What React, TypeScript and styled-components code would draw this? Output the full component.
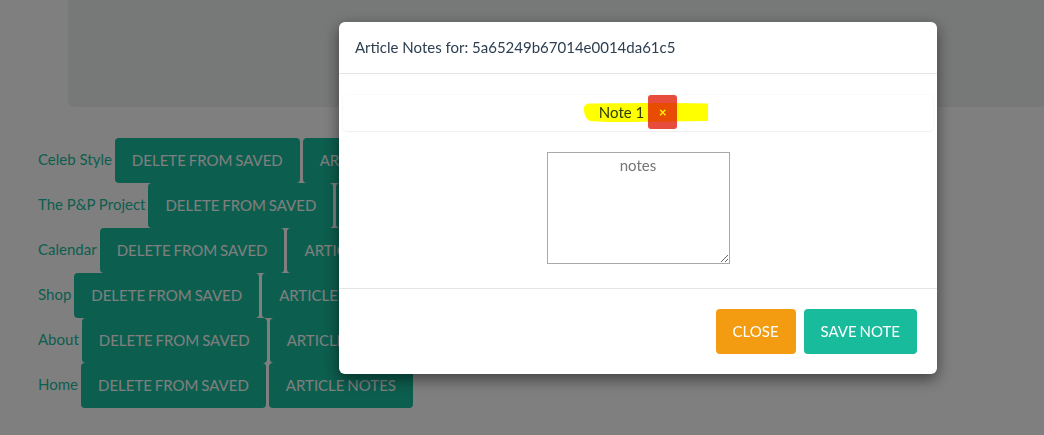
import React from "react";
import styled, { createGlobalStyle } from "styled-components";

const GlobalStyle = createGlobalStyle`
  html, body {
    margin: 0;
    background: #ffffff;
    font-family: Lato, "Open Sans", Arial, sans-serif;
    overflow: hidden;
  }
`;

const Page = styled.div`
  width: 1044px;
  height: 435px;
  padding-left: 38px;
  box-sizing: border-box;
`;

const Jumbotron = styled.div`
  height: 107px;
  margin-left: 30px;
  margin-right: -40px;
  background: #eef3f1;
  border-bottom-left-radius: 6px;
`;

const SavedList = styled.div`
  margin-top: 31px;
  display: flex;
  flex-direction: column;
`;

const Row = styled.div`
  display: flex;
  align-items: baseline;
  gap: 3px;
`;

const RowLink = styled.a`
  color: #18bc9c;
  font-size: 15px;
  line-height: 21px;
  text-decoration: none;
  position: relative;
  top: -1px;
`;

const Btn = styled.button<{ $tone: "teal" | "orange" | "red" }>`
  font-family: Lato, "Open Sans", Arial, sans-serif;
  font-size: 15px;
  line-height: 21px;
  padding: 11px 16px;
  border: 1px solid transparent;
  border-radius: 4px;
  color: #ffffff;
  text-transform: uppercase;
  word-spacing: -1px;
  white-space: nowrap;
  cursor: pointer;
  background: ${(p) =>
    p.$tone === "teal" ? "#18bc9c" : p.$tone === "orange" ? "#f39c12" : "#e74c3c"};
`;

const Backdrop = styled.div`
  position: fixed;
  inset: 0;
  background: rgba(0, 0, 0, 0.5);
`;

const Dialog = styled.div`
  position: fixed;
  top: 22px;
  left: 339px;
  width: 598px;
  background: #ffffff;
  border-radius: 6px;
  box-shadow: 0 5px 15px rgba(0, 0, 0, 0.5);
  color: #2c3e50;
`;

const Header = styled.div`
  padding: 15px 16px;
  border-bottom: 1px solid #e5e5e5;
`;

const Title = styled.h4`
  margin: 0;
  font-size: 15px;
  line-height: 21px;
  font-weight: 400;
`;

const Body = styled.div`
  padding: 21px 4px 24px 4px;
`;

const NoteCard = styled.div`
  position: relative;
  height: 36px;
  display: flex;
  justify-content: center;
  align-items: flex-start;
  gap: 4px;
  border-radius: 4px;
  box-shadow: 0 1px 2px rgba(0, 0, 0, 0.06), 0 0 0 1px rgba(0, 0, 0, 0.015);
`;

const NoteText = styled.span`
  font-size: 15px;
  line-height: 34px;
`;

const RemoveBtn = styled.button`
  width: 29px;
  height: 34px;
  padding: 0;
  border: none;
  border-radius: 3px;
  background: #e74c3c;
  color: #ffffff;
  font-family: Lato, Arial, sans-serif;
  font-size: 13px;
  font-weight: 700;
  line-height: 34px;
`;

const Highlight = styled.svg`
  position: absolute;
  left: 0;
  top: 0;
  width: 100%;
  height: 36px;
  mix-blend-mode: multiply;
  pointer-events: none;
`;

const Notes = styled.textarea`
  display: block;
  box-sizing: border-box;
  width: 183px;
  height: 112px;
  margin: 21px auto 0;
  padding: 2px 2px;
  border: 1px solid #a9a9a9;
  font-family: Lato, Arial, sans-serif;
  font-size: 15px;
  line-height: 20px;
  text-align: center;
  color: #2c3e50;
  &::placeholder {
    color: #757575;
  }
`;

const Footer = styled.div`
  padding: 20px;
  border-top: 1px solid #e5e5e5;
  display: flex;
  justify-content: flex-end;
  gap: 8px;
`;

const saved = ["Celeb Style", "The P&P Project", "Calendar", "Shop", "About", "Home"];

export default function App() {
  return (
    <>
      <GlobalStyle />
      <Page>
        <Jumbotron />
        <SavedList>
          {saved.map((name) => (
            <Row key={name}>
              <RowLink href="#">{name}</RowLink>
              <Btn $tone="teal">Delete from saved</Btn>
              <Btn $tone="teal">Article notes</Btn>
            </Row>
          ))}
        </SavedList>
      </Page>
      <Backdrop />
      <Dialog>
        <Header>
          <Title>Article Notes for: 5a65249b67014e0014da61c5</Title>
        </Header>
        <Body>
          <NoteCard>
            <NoteText>Note 1</NoteText>
            <RemoveBtn>×</RemoveBtn>
            <Highlight viewBox="0 0 590 36" preserveAspectRatio="none">
              <path
                d="M246 8.5 C242 9 240 12 241 16 C241.5 20 243 24 247 26 C262 27.5 290 27 320 26.5 L365 26 L365 8.5 L330 8 C300 8 270 8.2 246 8.5 Z"
                fill="#ffff00"
              />
            </Highlight>
          </NoteCard>
          <Notes placeholder="notes" />
        </Body>
        <Footer>
          <Btn $tone="orange">Close</Btn>
          <Btn $tone="teal">Save note</Btn>
        </Footer>
      </Dialog>
    </>
  );
}
